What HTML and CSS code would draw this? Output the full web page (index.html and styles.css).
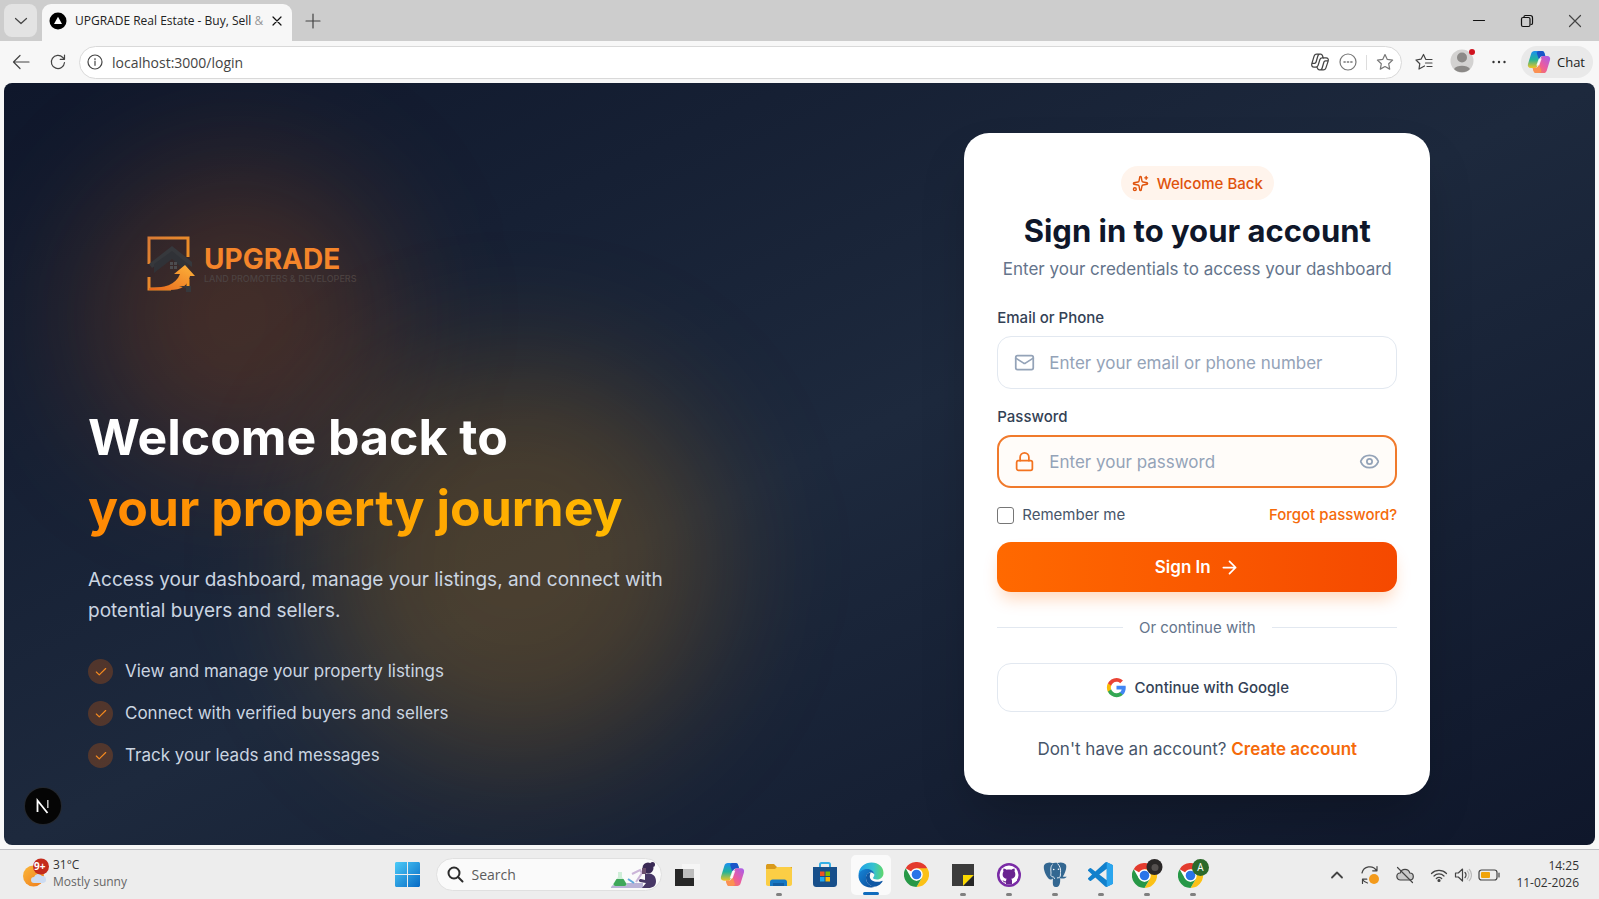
FILE: index.html
```html
<!DOCTYPE html>
<html lang="en">
<head>
  <meta charset="UTF-8" />
  <meta name="viewport" content="width=device-width, initial-scale=1" />
  <title>UPGRADE Real Estate - Buy, Sell &amp; Rent</title>
  <link rel="stylesheet" href="styles.css">
</head>
<body>
  <!-- shared gradients and symbols -->
  <svg class="defs" width="0" height="0" aria-hidden="true">
    <defs>
      <linearGradient id="cpA" x1="0" y1="0" x2="0" y2="1"><stop offset="0" stop-color="#1b8ff0"/><stop offset=".5" stop-color="#22b39a"/><stop offset="1" stop-color="#f2c522"/></linearGradient>
      <linearGradient id="cpB" x1="1" y1="0" x2="0" y2="1"><stop offset="0" stop-color="#a45df0"/><stop offset=".5" stop-color="#ec5c9d"/><stop offset="1" stop-color="#fb8a3c"/></linearGradient>
      <linearGradient id="winG" x1="0" y1="0" x2="1" y2="1"><stop offset="0" stop-color="#4ccbf8"/><stop offset="1" stop-color="#0669c4"/></linearGradient>
      <linearGradient id="edgeA" x1="0" y1="0" x2="1" y2="0"><stop offset="0" stop-color="#1e9fe8"/><stop offset=".6" stop-color="#35c1d0"/><stop offset="1" stop-color="#5fd76a"/></linearGradient>
      <linearGradient id="edgeB" x1="0" y1="0" x2="1" y2="1"><stop offset="0" stop-color="#1685d8"/><stop offset="1" stop-color="#0b4a96"/></linearGradient>
      <linearGradient id="logoG" x1="0" y1="0" x2="1" y2="1"><stop offset="0" stop-color="#d97b35"/><stop offset="1" stop-color="#f99a20"/></linearGradient>
      <linearGradient id="arrowG" x1="0" y1="1" x2="1" y2="0"><stop offset="0" stop-color="#e8661c"/><stop offset="1" stop-color="#fdb43a"/></linearGradient>
      <linearGradient id="sunG" x1="0" y1="0" x2="1" y2="1"><stop offset="0" stop-color="#fbb83a"/><stop offset="1" stop-color="#ee7a1c"/></linearGradient>
    </defs>
    <symbol id="copilot" viewBox="0 0 24 24">
      <path d="M7.500 1h7.500c1.300 0 2 .9 2.400 2l.9 3h-2.600c-1.700 0-2.700.8-3.200 2.500L10.200 16c-.5 1.500-1.300 2-2.700 2H3.800C1.500 18 .3 16.300 1 14L4.200 3.600C4.700 1.900 5.800 1 7.500 1z" fill="url(#cpA)"/>
      <path d="M12 1h3c1.300 0 2 .9 2.400 2l.9 3h-2.600c-1.700 0-2.700.8-3.200 2.500L12 10 9.800 3.200C9.500 2 10.500 1 12 1z" fill="#1a55c8"/>
      <path d="M16.500 23H9c-1.300 0-2-.9-2.400-2l-.9-3h2.600c1.700 0 2.700-.8 3.200-2.500L13.800 8c.5-1.500 1.300-2 2.700-2h3.700c2.300 0 3.500 1.700 2.800 4l-3.200 10.400c-.5 1.700-1.600 2.600-3.300 2.600z" fill="url(#cpB)"/>
      <path d="M12 23H9c-1.300 0-2-.9-2.400-2l-.9-3h2.600c1.700 0 2.700-.8 3.200-2.500L12 14l2.200 6.800C14.500 22 13.500 23 12 23z" fill="#fb9152"/>
      <path d="M9.300 15.500 11.800 8.500h2.900l-2.500 7z" fill="#fff" opacity=".85"/>
    </symbol>
    <symbol id="chrome" viewBox="0 0 24 24">
      <circle cx="12" cy="12" r="12" fill="#fff"/>
      <path d="M12 12 1.600 6A12 12 0 0 1 22.400 6z" fill="#e33b2e"/>
      <path d="M12 12V6h10.400A12 12 0 0 1 12 24l5.200-9z" fill="#fbc116"/>
      <path d="M1.600 6 6.800 15 12 18l5.200-3L12 24A12 12 0 0 1 1.600 6z" fill="#279847"/>
      <circle cx="12" cy="12" r="6" fill="#fff"/>
      <circle cx="12" cy="12" r="4.600" fill="#2a74e8"/>
    </symbol>
  </svg>

  <header class="browser">
    <div class="tab-strip">
      <button class="tab-menu" aria-label="Tab actions">
        <svg width="16" height="16" viewBox="0 0 16 16" class="line"><path d="m2.500 5.500 5.500 5 5.500-5"/></svg>
      </button>
      <div class="tab">
        <svg width="18" height="18" viewBox="0 0 18 18"><circle cx="9" cy="9" r="8.500" fill="#000"/><path d="M9 4.800 13 12H5z" fill="#fff"/></svg>
        <span class="tab-title">UPGRADE Real Estate - Buy, Sell <span>&amp;</span></span>
        <button class="icon-btn" aria-label="Close tab">
          <svg width="12" height="12" viewBox="0 0 12 12" class="line dark"><path d="m2 2 8 8M10 2l-8 8"/></svg>
        </button>
      </div>
      <button class="icon-btn new-tab" aria-label="New tab">
        <svg width="18" height="18" viewBox="0 0 18 18" class="line"><path d="M9 2v14M2 9h14"/></svg>
      </button>
      <div class="window-controls">
        <button class="icon-btn" aria-label="Minimize"><svg width="14" height="14" viewBox="0 0 14 14" class="line dark"><path d="M1.500 6.500h11"/></svg></button>
        <button class="icon-btn" aria-label="Restore"><svg width="14" height="14" viewBox="0 0 14 14" class="line dark"><rect x="1.500" y="3.500" width="8.500" height="9" rx="1.500"/><path d="M4 3.500V2.800C4 2 4.500 1.500 5.300 1.500h5c1.200 0 2.200 1 2.200 2.200v5.500c0 .8-.6 1.300-1.500 1.300"/></svg></button>
        <button class="icon-btn" aria-label="Close"><svg width="14" height="14" viewBox="0 0 14 14" class="line"><path d="m1.500 1.500 11 11M12.500 1.500l-11 11"/></svg></button>
      </div>
    </div>

    <div class="toolbar">
      <button class="icon-btn" aria-label="Back"><svg width="20" height="20" viewBox="0 0 20 20" class="line"><path d="M18 10H2.500M9 3.500 2.500 10 9 16.500"/></svg></button>
      <button class="icon-btn" aria-label="Refresh"><svg width="18" height="18" viewBox="0 0 18 18" class="line"><path d="M15.500 9.500A6.600 6.600 0 1 1 13.800 4.500l1.700 1.800M15.500 2v4.300h-4.300"/></svg></button>
      <div class="address">
        <svg width="16" height="16" viewBox="0 0 16 16" class="line"><circle cx="8" cy="8" r="7"/><path d="M8 7.300v4M8 4.500v1.200"/></svg>
        <input type="text" value="localhost:3000/login" aria-label="Address">
        <button class="icon-btn" aria-label="Copilot">
          <svg width="20" height="20" viewBox="0 0 24 24" class="line copilot-line"><path d="M16 7.500 15 4.500c-.4-1.200-1-2-2.300-2H8c-1.600 0-2.500.8-3 2.200L2.200 14c-.7 2.300.4 4 2.500 4h2.600c1.400 0 2-.6 2.400-1.900l2.200-7.100c.5-1.500 1.300-2 2.800-2h4.600c2.100 0 3.200 1.700 2.500 4L19 19.300c-.5 1.400-1.400 2.200-3 2.200h-4.700c-1.300 0-1.900-.8-2.300-2l-.6-1.600M11.500 2.500c-1.200.2-1.700 1-2 2L7.300 12c-.3 1-.8 1.500-1.800 1.500H2.500M12.500 21.500c1.200-.2 1.700-1 2-2L16.700 12c.3-1 .8-1.500 1.800-1.500h3"/></svg>
        </button>
        <button class="icon-btn" aria-label="More in page">
          <svg width="18" height="18" viewBox="0 0 18 18" class="line soft"><circle cx="9" cy="9" r="8"/><path d="M5 9h1.200M8.400 9h1.200M11.800 9H13" stroke-width="1.500"/></svg>
        </button>
        <span class="divider"></span>
        <button class="icon-btn" aria-label="Add to favorites">
          <svg width="18" height="18" viewBox="0 0 18 18" class="line soft"><path d="m9 1.500 2.300 4.900 5.300.7-3.900 3.700 1 5.300L9 13.500l-4.700 2.600 1-5.300L1.400 7.100l5.300-.7z"/></svg>
        </button>
      </div>
      <button class="icon-btn" aria-label="Favorites">
        <svg width="18" height="18" viewBox="0 0 18 18" class="line"><path d="M9.500 13 4 16l.8-5.300L1 7l5-.8L8.500 1.500l2.200 4.700M11 6.500h6M10.500 10H17M12 13.500h5"/></svg>
      </button>
      <button class="icon-btn profile" aria-label="Profile">
        <svg width="28" height="28" viewBox="0 0 28 28"><circle cx="13" cy="15" r="11.500" fill="#d3d2d1"/><circle cx="13" cy="11.500" r="5" fill="#8b8987"/><path d="M5 23a9 6 0 0 1 16 0 11.500 11.500 0 0 1-16 0z" fill="#8b8987"/><circle cx="23" cy="6" r="3" fill="#d0131f"/></svg>
      </button>
      <button class="icon-btn" aria-label="Settings and more">
        <svg width="16" height="16" viewBox="0 0 16 16"><g fill="#333"><circle cx="2.500" cy="8" r="1.200"/><circle cx="8" cy="8" r="1.200"/><circle cx="13.500" cy="8" r="1.200"/></g></svg>
      </button>
      <button class="chat"><svg width="24" height="24"><use href="#copilot"/></svg>Chat</button>
    </div>
  </header>

  <main class="page">
    <section class="hero">
      <div class="blob blob-orange"></div>
      <div class="blob blob-amber"></div>
      <div class="logo">
        <svg width="54" height="58" viewBox="0 0 54 58">
          <path d="M2 29V3h39v19M2 42v12h22M41 54V44" fill="none" stroke="url(#logoG)" stroke-width="3"/>
          <path d="m2 29 23-18 20 16v5L25 18 5 33z" fill="#36383c"/>
          <path d="m7 29 18-13 16 13v9L25 24 7 38z" fill="#303237"/>
          <path d="M23 27h3v3h-3zM27 27h3v3h-3zM23 31h3v3h-3zM27 31h3v3h-3z" fill="#4c4c4f"/>
          <path d="M2 53c15 0 27-3 31-14h-6l11-9 10 11h-5c-2 10-9 14-20 14H2z" fill="url(#arrowG)"/>
          <path d="M32 51h12v6h-5v-4z" fill="#36383c"/>
        </svg>
        <div class="logo-text">
          <strong>UPGRADE</strong>
          <small>LAND PROMOTERS &amp; DEVELOPERS</small>
        </div>
      </div>

      <h1>Welcome back to <span>your property journey</span></h1>
      <p class="lead">Access your dashboard, manage your listings, and connect with potential buyers and sellers.</p>
      <ul class="features">
        <li><i><svg width="14" height="14" viewBox="0 0 24 24"><path d="M20 6 9 17l-5-5"/></svg></i>View and manage your property listings</li>
        <li><i><svg width="14" height="14" viewBox="0 0 24 24"><path d="M20 6 9 17l-5-5"/></svg></i>Connect with verified buyers and sellers</li>
        <li><i><svg width="14" height="14" viewBox="0 0 24 24"><path d="M20 6 9 17l-5-5"/></svg></i>Track your leads and messages</li>
      </ul>
    </section>

    <section class="auth">
      <form class="card">
        <div class="badge">
          <svg width="17" height="17" viewBox="0 0 24 24" class="lucide"><path d="M11.017 2.814a1 1 0 0 1 1.966 0l1.051 5.558a2 2 0 0 0 1.594 1.594l5.558 1.051a1 1 0 0 1 0 1.966l-5.558 1.051a2 2 0 0 0-1.594 1.594l-1.051 5.558a1 1 0 0 1-1.966 0l-1.051-5.558a2 2 0 0 0-1.594-1.594l-5.558-1.051a1 1 0 0 1 0-1.966l5.558-1.051a2 2 0 0 0 1.594-1.594zM20 2v4M22 4h-4"/><circle cx="4" cy="20" r="2"/></svg>
          Welcome Back
        </div>
        <h2>Sign in to your account</h2>
        <p class="subtitle">Enter your credentials to access your dashboard</p>

        <label class="field-label" for="email">Email or Phone</label>
        <div class="field">
          <svg width="21" height="21" viewBox="0 0 24 24" class="lucide"><rect x="2" y="4" width="20" height="16" rx="2"/><path d="m22 7-8.991 5.727a2 2 0 0 1-2.009 0L2 7"/></svg>
          <input id="email" type="text" placeholder="Enter your email or phone number">
        </div>

        <label class="field-label" for="password">Password</label>
        <div class="field active">
          <svg width="21" height="21" viewBox="0 0 24 24" class="lucide"><rect x="3" y="11" width="18" height="11" rx="2"/><path d="M7 11V7a5 5 0 0 1 10 0v4"/></svg>
          <input id="password" type="password" placeholder="Enter your password">
          <button type="button" class="icon-btn" aria-label="Show password">
            <svg width="21" height="21" viewBox="0 0 24 24" class="lucide"><path d="M2.062 12.348a1 1 0 0 1 0-.696 10.750 10.750 0 0 1 19.876 0 1 1 0 0 1 0 .696 10.750 10.750 0 0 1-19.876 0"/><circle cx="12" cy="12" r="3"/></svg>
          </button>
        </div>

        <div class="options">
          <label><input type="checkbox">Remember me</label>
          <a href="#">Forgot password?</a>
        </div>

        <button type="submit" class="btn-primary">Sign In
          <svg width="21" height="21" viewBox="0 0 24 24" class="lucide"><path d="M5 12h14M12 5l7 7-7 7"/></svg>
        </button>

        <div class="separator">Or continue with</div>

        <button type="button" class="btn-google">
          <svg width="21" height="21" viewBox="0 0 24 24"><path fill="#4285f4" d="M22.560 12.250c0-.78-.07-1.530-.2-2.250H12v4.260h5.920c-.26 1.370-1.040 2.530-2.210 3.310v2.770h3.570c2.080-1.920 3.280-4.740 3.280-8.090z"/><path fill="#34a853" d="M12 23c2.970 0 5.460-.98 7.280-2.660l-3.570-2.770c-.98.66-2.230 1.060-3.710 1.060-2.860 0-5.290-1.930-6.160-4.530H2.180v2.840C3.990 20.530 7.700 23 12 23z"/><path fill="#fbbc05" d="M5.840 14.090c-.22-.66-.35-1.360-.35-2.090s.13-1.430.35-2.090V7.070H2.180C1.430 8.550 1 10.220 1 12s.43 3.450 1.180 4.930z"/><path fill="#ea4335" d="M12 5.380c1.620 0 3.060.56 4.210 1.640l3.150-3.150C17.450 2.090 14.970 1 12 1 7.700 1 3.990 3.470 2.180 7.070l3.660 2.840c.87-2.600 3.300-4.530 6.160-4.530z"/></svg>
          Continue with Google
        </button>

        <p class="signup">Don't have an account? <a href="#">Create account</a></p>
      </form>
    </section>

    <button class="next-badge" aria-label="Open Next.js Dev Tools">
      <svg width="16" height="16" viewBox="0 0 16 16"><path d="M2.500 14V2.500L12.500 15" fill="none" stroke="#fff" stroke-width="1.800"/><path d="M12.800 2v8" stroke="#bbb" stroke-width="1.600"/></svg>
    </button>
  </main>

  <footer class="taskbar">
    <div class="weather">
      <svg width="28" height="30" viewBox="0 0 28 30"><circle cx="11.500" cy="18" r="10.500" fill="url(#sunG)"/><path d="M12 25a3 3 0 0 1 0-6 4.500 4.500 0 0 1 8-1 3.500 3.500 0 0 1 1 7z" fill="#cddcf2"/><circle cx="19" cy="8.500" r="8" fill="#c42b1c"/></svg>
      <b>9+</b>
      <p>31°C<span>Mostly sunny</span></p>
    </div>

    <div class="apps">
      <button class="app" aria-label="Start"><svg width="25" height="25" viewBox="0 0 25 25" fill="url(#winG)"><path d="M0 1.500C0 .7.700 0 1.500 0H12v12H0zM13 0h10.500c.8 0 1.500.7 1.500 1.500V12H13zM0 13h12v12H1.500C.7 25 0 24.300 0 23.500zM13 13h12v10.500c0 .8-.7 1.500-1.500 1.500H13z"/></svg></button>
      <div class="search">
        <svg width="17" height="17" viewBox="0 0 17 17" fill="none" stroke="#2b2b2b" stroke-width="2" stroke-linecap="round"><circle cx="7" cy="7" r="5.500"/><path d="m11 11 4.500 4.500"/></svg>
        <input type="text" placeholder="Search" aria-label="Search">
        <svg width="46" height="28" viewBox="0 0 46 28"><path d="M0 26c2-3 6-4 10-4h22v5H0z" fill="#b9b2d6"/><path d="M7 11h4v5l5 7c0 1-1 2-2 2H4c-1 0-2-1-2-2l5-7z" fill="#cfeed8"/><path d="M5.500 18h7l3 5c0 1-1 2-2 2h-9c-1 0-2-1-2-2z" fill="#3fa75a"/><path d="m17 18 6 4" stroke="#62a9dc" stroke-width="2"/><path d="m21 13 8-4 2 3-6 9" fill="none" stroke="#cbb5d8" stroke-width="2"/><circle cx="37" cy="7" r="5.500" fill="#3a2a55"/><circle cx="41.500" cy="3.500" r="2.500" fill="#3a2a55"/><path d="M31 7h4v6h-4z" fill="#6b4f6e"/><path d="M34 13c6-2 11 1 11 7 0 5-3 7-8 7h-6l4-5-6-1c-2-1-1-3 1-3l4 1z" fill="#473766"/></svg>
      </div>
      <button class="app" aria-label="Task view"><svg width="26" height="24" viewBox="0 0 26 24"><path d="M8 1h18v16H8z" fill="#f5f5f5"/><path d="M1 6h8v9h11v8H1z" fill="#262626"/><path d="M9 6h11v9H9z" fill="#bdbdbd"/></svg></button>
      <button class="app" aria-label="Copilot"><svg width="25" height="25"><use href="#copilot"/></svg></button>
      <button class="app running" aria-label="File Explorer"><svg width="26" height="24" viewBox="0 0 26 24"><path d="M0 3c0-1.500.8-2 2-2h6l3 3h15v8H0z" fill="#d99a1c"/><path d="M0 6h9l2-2h13c1 0 2 .8 2 2v15c0 1-1 2-2 2H2c-1.200 0-2-.8-2-2z" fill="#fbce45"/><path d="M4 23v-4c0-1.500 1-2.500 2.500-2.500h12c1.500 0 2.500 1 2.500 2.500v4z" fill="#1678c4"/><path d="M7 20h11v3H7z" fill="#125ea3"/></svg></button>
      <button class="app" aria-label="Microsoft Store"><svg width="26" height="26" viewBox="0 0 26 26"><path d="M8 6V2.500C8 1.700 8.600 1 9.500 1h7c.9 0 1.500.7 1.500 1.500V6" fill="none" stroke="#35b0e6" stroke-width="2"/><path d="M1 5h24v16c0 3-1 4-4 4H5c-3 0-4-1-4-4z" fill="#174f8a"/><path d="M8 9.500h4.500V14H8z" fill="#f05022"/><path d="M13.500 9.500H18V14h-4.500z" fill="#7fba00"/><path d="M8 15h4.500v4.500H8z" fill="#1fa8ee"/><path d="M13.500 15H18v4.500h-4.500z" fill="#fdb900"/></svg></button>
      <button class="app current" aria-label="Microsoft Edge"><svg width="26" height="26" viewBox="0 0 26 26"><path d="M.5 12C1.500 4.500 7 .5 13.500.5 20.500.5 25.500 5 25.500 11c0 4-3 6.500-6.500 6.500-2.500 0-4-.8-4-1.500s1.300-1.200 1.300-3.200C16.300 10 13 8 9.500 8 5 8 2 10 .5 12z" fill="url(#edgeA)"/><path d="M.5 13C1 9.500 5 7 9 7c4 0 7.300 2.500 7.300 5.500-.8-1.500-2.300-2-3.600-2-3 0-4.700 2.700-4.700 5.500 0 5 4.500 8.500 9 8.500-1 .8-3 1-4.500 1C6 25.500 0 20 .5 13z" fill="url(#edgeB)"/><path d="M12.500 10.500C9 11 8 13.700 8 16c0 5 4.500 8.500 9 8.500 3 0 6-2.500 7.500-5 .3-.6-.2-.8-.7-.6-4.800 2-12 .6-12-4.400 0-2 .7-3 .7-4z" fill="#0e57a4"/></svg></button>
      <button class="app" aria-label="Google Chrome"><svg width="25" height="25"><use href="#chrome"/></svg></button>
      <button class="app running" aria-label="Sticky Notes"><svg width="22" height="22" viewBox="0 0 22 22"><path d="M0 0h22v11L11 22H0z" fill="#3b3b3b"/><path d="M11 22V11h11z" fill="#fbd900"/><path d="M11 22h11V11z" fill="#262626"/></svg></button>
      <button class="app running" aria-label="GitHub Desktop"><svg width="24" height="24" viewBox="0 0 24 24"><circle cx="12" cy="12" r="12" fill="#7a2ba6"/><circle cx="12" cy="12" r="9.500" fill="#fff"/><path d="M6.500 5.500c1.500 0 2.500.8 3.200 1.300 1.500-.4 3.100-.4 4.600 0 .7-.5 1.700-1.300 3.200-1.300.4 1.300.3 2.200 0 3 1.700 2.700 1 6.800-3.200 7.300.5.500.7 1.200.7 2V21c-2 .6-4 .6-6 0v-1.600c-2.200.3-2.700-1-3.600-2.200 1.300 0 2 1.400 3.600 1 0-1 .2-1.900.7-2.400-4.200-.5-4.900-4.600-3.200-7.300-.3-.8-.4-1.700 0-3z" fill="#6a2490"/></svg></button>
      <button class="app running" aria-label="PostgreSQL"><svg width="24" height="26" viewBox="0 0 24 26"><path d="M4 1c2-1 4-.5 5.500.3C11 .5 13 .6 14.500 1c3-1.200 6.500-.6 8.300 1.500 1.500 2.500-.6 9-3 12 1.500.6 3 .3 4 .2-1 1.500-3.500 2-5.300 1.800l-1.300-.3c0 3 .2 8-3.400 8.800-3 .6-4-1.500-4-4l.1-4.500c-.7.6-1.700 1.300-2.700 1C4 16.500.7 9 .8 5 .8 3 2 1.600 4 1z" fill="#336791"/><path d="M9.500 2.500C7 5 8 9 8 11c0 2-1 3 2 4M14.500 1.500c2.500 2.500 3.500 6 3 9-.3 2 .5 3-1 5M10 15c1 0 1.500.8 1.500 2M16.500 15.800c-.8-.3-1.800 0-2.500.2" fill="none" stroke="#e8eef4"/><circle cx="10.700" cy="7.500" r=".8" fill="#fff"/><circle cx="15.500" cy="7.300" r=".8" fill="#fff"/></svg></button>
      <button class="app running" aria-label="Visual Studio Code"><svg width="25" height="25" viewBox="0 0 24 24"><path d="M23.150 2.587L18.210.21a1.494 1.494 0 0 0-1.705.29l-9.460 8.630-4.120-3.128a.999.999 0 0 0-1.276.057L.327 7.261A1 1 0 0 0 .326 8.740L3.899 12 .326 15.260a1 1 0 0 0 .001 1.479L1.650 17.940a.999.999 0 0 0 1.276.057l4.120-3.128 9.460 8.630a1.492 1.492 0 0 0 1.704.29l4.942-2.377A1.500 1.500 0 0 0 24 20.060V3.939a1.500 1.500 0 0 0-.85-1.352zm-5.146 14.861L10.826 12l7.178-5.448v10.896z" fill="#1180cc"/><path d="M18 .2 23.150 2.600c.5.200.85.700.85 1.300v16.200c0 .6-.3 1.100-.85 1.300L18 23.800z" fill="#2aa5ee"/></svg></button>
      <button class="app running" aria-label="Google Chrome, profile 1"><svg width="32" height="32" viewBox="0 0 32 32"><use href="#chrome" x="1" y="4" width="25" height="25"/><circle cx="23.500" cy="8" r="8" fill="#2a2727"/><circle cx="24" cy="8.500" r="3.500" fill="#55504f"/></svg></button>
      <button class="app running" aria-label="Google Chrome, profile 2"><svg width="32" height="32" viewBox="0 0 32 32"><use href="#chrome" x="1" y="4" width="25" height="25"/><circle cx="23.500" cy="8.500" r="8.500" fill="#2c6a2a"/></svg><b>A</b></button>
    </div>

    <div class="tray">
      <svg width="14" height="14" viewBox="0 0 14 14" class="line bold"><path d="m2 9.500 5-5 5 5"/></svg>
      <svg width="20" height="20" viewBox="0 0 20 20" class="line"><path d="M2 8a8 8 0 0 1 14.500-2.500M17 1.500v4.300h-4.300M2.500 18.500v-4.300h4.300M2.500 14.500a8 8 0 0 0 5 3.500"/><circle cx="14" cy="14" r="5" fill="#f39a1b" stroke="none"/></svg>
      <svg width="18" height="18" viewBox="0 0 18 18" class="line"><path d="M4.500 14a3.500 3.500 0 0 1-.3-7A5 5 0 0 1 13.800 7a3.500 3.500 0 0 1 0 7z" fill="#c9c9c9"/><path d="m1.500 1.500 15 15"/></svg>
      <div class="tray-status">
        <svg width="18" height="16" viewBox="0 0 18 16" class="line"><path d="M1.500 6.500a10.500 10.500 0 0 1 15 0M4 9a7 7 0 0 1 10 0M6.300 11.500a4 4 0 0 1 5.400 0"/><circle cx="9" cy="13.500" r="1" fill="#333"/></svg>
        <svg width="18" height="16" viewBox="0 0 18 16" class="line"><path d="M1.500 6v4h2.800L8.500 14V2L4.300 6zM11 5.500a3.500 3.500 0 0 1 0 5"/><path d="M13.300 4a6 6 0 0 1 0 8M15.300 2.500a8 8 0 0 1 0 11" stroke="#bbb"/></svg>
        <svg width="22" height="14" viewBox="0 0 22 14" class="line"><rect x="1" y="2" width="18" height="10" rx="2.500"/><rect x="3" y="4" width="9" height="6" rx="1" fill="#f0a30a" stroke="none"/><path d="M21 5v4"/></svg>
      </div>
      <p class="clock">14:25<span>11-02-2026</span></p>
    </div>
  </footer>
</body>
</html>
```
FILE: styles.css
```css
:root {
  --orange: #f56a0a;
  --orange-dark: #e0530c;
  --slate-300: #cbd5e1;
  --slate-400: #94a3b8;
  --slate-500: #64748b;
  --slate-600: #475569;
  --slate-700: #334155;
  --slate-900: #0f172a;
  --border: #e2e8f0;
  --chrome: #f7f7f7;
  --system: 'Segoe UI', 'Open Sans', 'Noto Sans', sans-serif;
}

* {
  margin: 0;
  padding: 0;
  box-sizing: border-box;
}

body {
  font-family: Inter, sans-serif;
  background: var(--chrome);
  min-height: 100vh;
  display: flex;
  flex-direction: column;
}

button,
input {
  font: inherit;
  color: inherit;
  border: none;
  background: none;
  outline: none;
}

button {
  cursor: pointer;
}

a {
  color: var(--orange);
  text-decoration: none;
}

svg {
  display: block;
  flex-shrink: 0;
}

.defs {
  position: absolute;
}

.line {
  fill: none;
  stroke: #444;
  stroke-width: 1.2;
  stroke-linecap: round;
  stroke-linejoin: round;
}

.line.dark {
  stroke: #111;
}

.line.soft {
  stroke: #777;
}

.line.bold {
  stroke-width: 1.8;
}

.line.copilot-line {
  stroke-width: 1.5;
}

.lucide {
  fill: none;
  stroke: currentColor;
  stroke-width: 2;
  stroke-linecap: round;
  stroke-linejoin: round;
}

.icon-btn {
  display: flex;
  align-items: center;
  justify-content: center;
}

/* Browser window */
.browser {
  font-family: var(--system);
  color: #222;
}

.tab-strip {
  display: flex;
  align-items: center;
  height: 41px;
  padding-left: 4px;
  background: #cdcdcd;
}

.tab-menu {
  display: flex;
  align-items: center;
  justify-content: center;
  width: 33px;
  height: 33px;
  border-radius: 8px;
  background: #e3e3e3;
}

.tab {
  display: flex;
  align-items: center;
  gap: 8px;
  width: 250px;
  height: 37px;
  margin-left: 5px;
  padding: 0 11px 4px 7px;
  align-self: flex-end;
  border-radius: 9px 9px 0 0;
  background: var(--chrome);
  font-size: 12px;
}

.tab-title {
  flex: 1;
  white-space: nowrap;
}

.tab-title span {
  color: #999;
}

.new-tab {
  margin-left: 12px;
}

.window-controls {
  display: flex;
  gap: 34px;
  margin-left: auto;
  padding-right: 17px;
}

.toolbar {
  display: flex;
  align-items: center;
  gap: 18px;
  height: 42px;
  padding: 0 6px 0 11px;
}

.address {
  flex: 1;
  display: flex;
  align-items: center;
  gap: 9px;
  height: 33px;
  margin: 0 -5px 0 -6px;
  padding: 0 7px;
  border: 1px solid #d9d9d9;
  border-radius: 17px;
  background: #fff;
}

.address input {
  flex: 1;
  min-width: 0;
  font-size: 14px;
  color: #444;
}

.divider {
  width: 1px;
  height: 15px;
  background: #ddd;
}

.profile {
  margin: -4px -4px 0 -2px;
}

.chat {
  display: flex;
  align-items: center;
  gap: 6px;
  height: 32px;
  margin-left: -4px;
  padding: 0 8px 0 6px;
  border-radius: 16px;
  background: #e9e9e9;
  font-size: 13px;
}

/* Login page */
.page {
  flex: 1;
  position: relative;
  display: grid;
  grid-template-columns: 1fr 1fr;
  margin: 0 4px;
  margin-bottom: 4px;
  border-radius: 8px;
  overflow: hidden;
  background: linear-gradient(to bottom right, #0f172b, #1d293d, #0f172b);
}

.hero {
  position: relative;
  display: flex;
  flex-direction: column;
  justify-content: center;
  padding: 0 84px;
}

.hero > * {
  position: relative;
}

.hero > .blob {
  position: absolute;
  border-radius: 50%;
  filter: blur(66px);
}

.blob-orange {
  top: 83px;
  left: 83px;
  width: 300px;
  height: 300px;
  background: rgba(255, 105, 0, 0.2);
}

.blob-amber {
  right: 83px;
  bottom: 83px;
  width: 400px;
  height: 400px;
  background: rgba(254, 154, 0, 0.2);
}

.logo {
  display: flex;
  align-items: center;
  gap: 3px;
  height: 208px;
  margin-bottom: 34px;
  padding-left: 59px;
}

.logo-text {
  display: flex;
  flex-direction: column;
}

.logo-text strong {
  font-size: 28px;
  font-weight: 700;
  line-height: 30px;
  color: #f5852a;
}

.logo-text small {
  font-size: 9px;
  font-weight: 500;
  line-height: 10px;
  color: #4c4241;
}

h1 {
  font-size: 50px;
  font-weight: 700;
  line-height: 71px;
  color: #fff;
}

h1 span {
  display: block;
  width: fit-content;
  background: linear-gradient(to right, #ff8904, #ffb900);
  -webkit-background-clip: text;
  background-clip: text;
  color: transparent;
}

.lead {
  max-width: 600px;
  margin: 20px 0 33px;
  font-size: 19px;
  line-height: 31px;
  color: var(--slate-300);
}

.features {
  display: flex;
  flex-direction: column;
  gap: 17px;
  list-style: none;
  font-size: 17px;
  line-height: 25px;
  color: var(--slate-300);
}

.features li {
  display: flex;
  align-items: center;
  gap: 12px;
}

.features i {
  display: grid;
  place-items: center;
  width: 25px;
  height: 25px;
  border-radius: 50%;
  background: rgba(255, 105, 0, 0.24);
}

.features path {
  fill: none;
  stroke: #f58a1f;
  stroke-width: 2;
  stroke-linecap: round;
  stroke-linejoin: round;
}

.auth {
  display: flex;
  align-items: center;
  justify-content: center;
}

.card {
  display: flex;
  flex-direction: column;
  width: 466px;
  padding: 33px;
  border-radius: 25px;
  background: #fff;
  box-shadow: 0 26px 52px -12px rgba(0, 0, 0, 0.25);
}

.badge {
  align-self: center;
  display: flex;
  align-items: center;
  gap: 8px;
  height: 34px;
  padding: 0 11px;
  border-radius: 17px;
  background: #fff4ec;
  font-size: 15px;
  font-weight: 500;
  color: var(--orange-dark);
}

h2 {
  margin: 12px 0 6px;
  font-size: 31px;
  font-weight: 700;
  line-height: 38px;
  text-align: center;
  color: var(--slate-900);
}

.subtitle {
  margin-bottom: 8px;
  font-size: 17px;
  line-height: 26px;
  text-align: center;
  color: var(--slate-500);
}

.field-label {
  margin: 17px 0 8px;
  font-size: 15px;
  font-weight: 500;
  line-height: 21px;
  color: var(--slate-700);
}

.field {
  display: flex;
  align-items: center;
  gap: 14px;
  height: 53px;
  padding: 0 16px;
  border: 1px solid var(--border);
  border-radius: 14px;
  color: var(--slate-400);
}

.field input {
  flex: 1;
  min-width: 0;
  font-size: 17px;
  color: var(--slate-900);
}

.field input::placeholder {
  color: var(--slate-400);
}

.field.active {
  padding: 0 15px;
  border: 2px solid #f07a2c;
  background: #fffcf9;
}

.field.active > svg {
  color: #f37320;
}

.options {
  display: flex;
  align-items: center;
  justify-content: space-between;
  margin: 16px 0;
  font-size: 15px;
  line-height: 22px;
  color: var(--slate-600);
}

.options label {
  display: flex;
  align-items: center;
  gap: 8px;
}

.options input {
  appearance: none;
  width: 17px;
  height: 17px;
  border: 1px solid #767676;
  border-radius: 3px;
}

.options a {
  font-weight: 500;
}

.btn-primary,
.btn-google {
  display: flex;
  align-items: center;
  justify-content: center;
  border-radius: 14px;
}

.btn-primary {
  gap: 8px;
  height: 50px;
  background: linear-gradient(to right, #ff6900, #f54900);
  box-shadow: 0 10px 16px -3px rgba(255, 105, 0, 0.25);
  font-size: 17px;
  font-weight: 600;
  color: #fff;
}

.separator {
  display: flex;
  align-items: center;
  gap: 16px;
  margin: 25px 0;
  font-size: 15px;
  line-height: 21px;
  color: var(--slate-500);
}

.separator::before,
.separator::after {
  content: '';
  flex: 1;
  height: 1px;
  background: var(--border);
}

.btn-google {
  gap: 8px;
  height: 49px;
  border: 1px solid var(--border);
  font-size: 15px;
  font-weight: 500;
  color: var(--slate-700);
}

.signup {
  margin-top: 25px;
  font-size: 17px;
  line-height: 25px;
  text-align: center;
  color: var(--slate-600);
}

.signup a {
  font-weight: 600;
}

.next-badge {
  position: absolute;
  left: 21px;
  bottom: 21px;
  display: grid;
  place-items: center;
  width: 36px;
  height: 36px;
  border-radius: 50%;
  background: #050505;
  box-shadow: 0 0 0 1px #24282f;
}

/* Windows taskbar */
.taskbar {
  display: grid;
  grid-template-columns: 1fr auto 1fr;
  align-items: center;
  height: 50px;
  border-top: 1px solid #bfc0c4;
  background: #ededed;
  font-family: var(--system);
  font-size: 12px;
  line-height: 17px;
  color: #333;
}

.taskbar p {
  padding-bottom: 2px;
}

.taskbar p span {
  display: block;
}

.weather {
  position: relative;
  display: flex;
  align-items: center;
  gap: 3px;
  padding: 0 0 4px 22px;
}

.weather p {
  padding-top: 2px;
}

.weather p span {
  color: #666;
}

.weather b {
  position: absolute;
  left: 34px;
  top: 4px;
  font-size: 10px;
  line-height: 16px;
  color: #fff;
}

.apps {
  display: flex;
  align-items: center;
  padding-left: 1px;
}

.app {
  position: relative;
  display: grid;
  place-items: center;
  width: 46px;
  height: 46px;
}

.app.running::after,
.app.current::after {
  content: '';
  position: absolute;
  bottom: 2px;
  left: 20px;
  width: 6px;
  height: 3px;
  border-radius: 2px;
  background: #808080;
}

.app.current {
  width: 40px;
  height: 40px;
  margin: 0 3px;
  border-radius: 5px;
  background: #fafafa;
}

.app.current::after {
  bottom: 0;
  left: 12px;
  width: 16px;
  background: #0f6cbd;
}

.app b {
  position: absolute;
  right: 12px;
  top: 7px;
  font-size: 10px;
  font-weight: 400;
  color: #fff;
}

.search {
  display: flex;
  align-items: center;
  gap: 8px;
  width: 226px;
  height: 33px;
  margin: 0 2px 0 5px;
  padding: 0 4px 0 10px;
  border: 1px solid #e0e0e0;
  border-radius: 17px;
  background: #fafafa;
}

.search input {
  flex: 1;
  min-width: 0;
  font-size: 14px;
}

.search input::placeholder {
  color: #5c5c5c;
}

.tray {
  display: flex;
  align-items: center;
  justify-content: flex-end;
  gap: 16px;
  padding-right: 20px;
}

.tray-status {
  display: flex;
  align-items: center;
  gap: 6px;
}

.clock {
  text-align: right;
}
```
